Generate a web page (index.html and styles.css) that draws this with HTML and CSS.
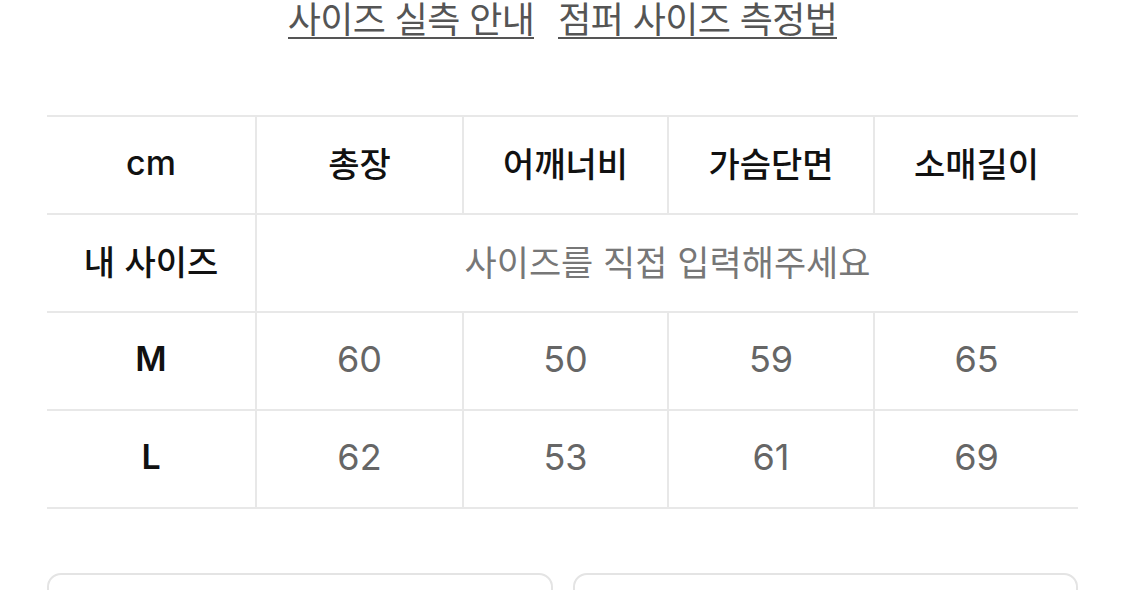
FILE: index.html
```html
<!DOCTYPE html>
<html lang="ko">
<head>
<meta charset="utf-8">
<title>사이즈</title>
<link rel="stylesheet" href="styles.css">
</head>
<body>
<div class="page">
  <nav class="guide-links">
    <a class="guide-link" href="#">사이즈 실측 안내</a>
    <a class="guide-link" href="#">점퍼 사이즈 측정법</a>
  </nav>

  <div class="size-table">
    <div class="cell head first latin">cm</div>
    <div class="cell head">총장</div>
    <div class="cell head">어깨너비</div>
    <div class="cell head">가슴단면</div>
    <div class="cell head">소매길이</div>

    <div class="cell head first">내 사이즈</div>
    <div class="cell input span4">사이즈를 직접 입력해주세요</div>

    <div class="cell head first latin bold">M</div>
    <div class="cell num">60</div>
    <div class="cell num">50</div>
    <div class="cell num">59</div>
    <div class="cell num">65</div>

    <div class="cell head first latin bold">L</div>
    <div class="cell num">62</div>
    <div class="cell num">53</div>
    <div class="cell num">61</div>
    <div class="cell num">69</div>
  </div>

  <div class="boxes">
    <div class="box"></div>
    <div class="box"></div>
  </div>
</div>
</body>
</html>
```

FILE: styles.css
```css
html, body {
  margin: 0;
  padding: 0;
  background: #ffffff;
  overflow: hidden;
}

.page {
  width: 1125px;
  height: 590px;
  font-family: "Noto Sans CJK KR", "Noto Sans", sans-serif;
}

.guide-links {
  display: flex;
  justify-content: center;
  align-items: flex-start;
  gap: 24px;
  height: 115px;
}

.guide-link {
  display: block;
  margin-top: -3px;
  font-size: 36px;
  line-height: 40px;
  color: #555555;
  text-decoration: none;
  border-bottom: 2px solid #555555;
  letter-spacing: -0.6px;
}

.size-table {
  display: grid;
  grid-template-columns: 208px 207px 205px 206px 205px;
  grid-auto-rows: 98px;
  margin-left: 47px;
  width: 1031px;
  border-top: 2px solid #e8e8e8;
}

.cell {
  display: flex;
  align-items: center;
  justify-content: center;
  padding-bottom: 5px;
  border-bottom: 2px solid #e8e8e8;
  border-left: 2px solid #e8e8e8;
  box-sizing: border-box;
}

.cell.first {
  border-left: none;
}

.head {
  font-size: 34px;
  font-weight: 500;
  color: #111111;
}

.latin {
  font-family: "Inter", "Liberation Sans", sans-serif;
  font-size: 34px;
  font-weight: 500;
}

.latin.bold {
  font-weight: 600;
}

.span4 {
  grid-column: span 4;
}

.input {
  font-size: 35px;
  color: #777777;
}

.num {
  font-family: "Inter", "Liberation Sans", sans-serif;
  font-size: 36px;
  font-weight: 400;
  color: #666666;
}

.boxes {
  display: flex;
  gap: 20px;
  margin: 64px 47px 0 47px;
}

.box {
  flex: 1;
  height: 120px;
  border: 2px solid #e4e4e4;
  border-radius: 14px;
}
```
